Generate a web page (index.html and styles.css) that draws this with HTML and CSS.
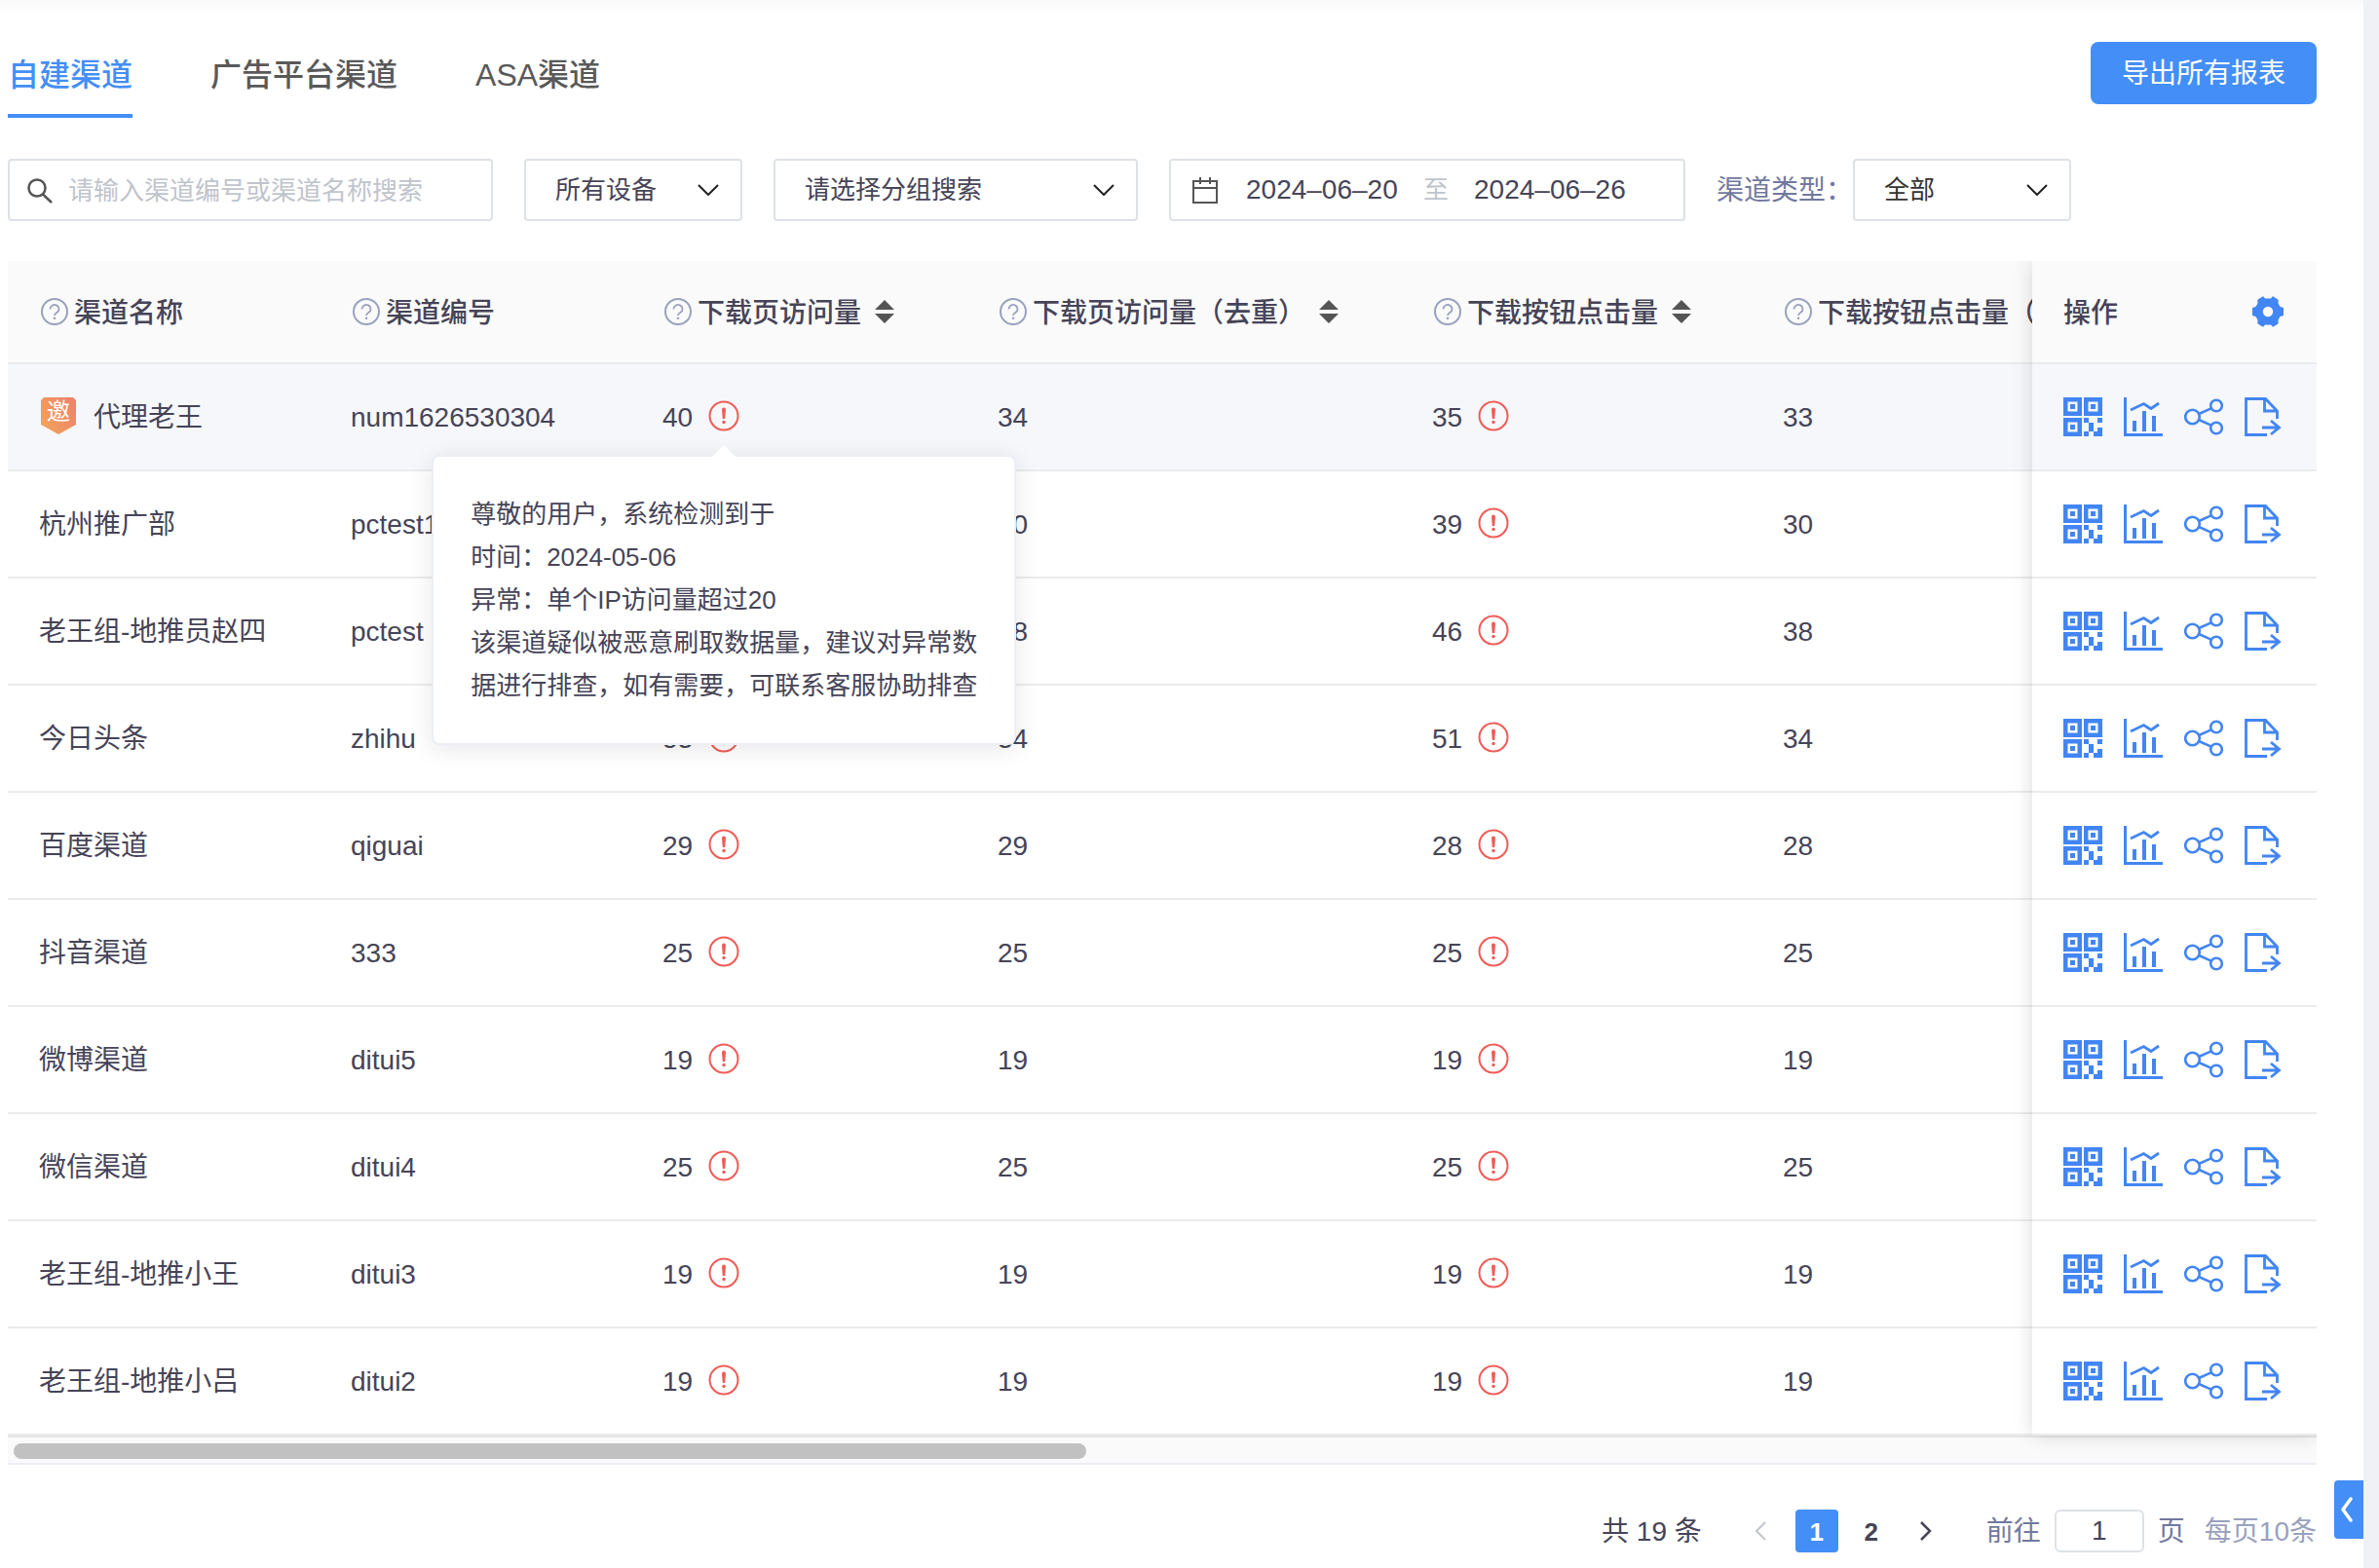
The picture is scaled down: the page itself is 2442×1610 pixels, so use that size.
FILE: index.html
```html
<!DOCTYPE html>
<html lang="zh-CN">
<head>
<meta charset="utf-8">
<title>渠道报表</title>
<link rel="stylesheet" href="styles.css">
</head>
<body>
<svg class="sprite" aria-hidden="true">
  <symbol id="help" viewBox="0 0 28 28"><circle cx="14" cy="14" r="13" fill="none" stroke="currentColor" stroke-width="2"/><path d="M9.500 11.500a4.500 4.300 0 1 1 7 3.300c-1.700 1.100-2.500 1.700-2.500 3.200" fill="none" stroke="currentColor" stroke-width="1.800"/><circle cx="14" cy="20.800" r="1.300" fill="currentColor"/></symbol>
  <symbol id="warn" viewBox="0 0 32 32"><circle cx="16" cy="16" r="14.500" fill="none" stroke="currentColor" stroke-width="2"/><path d="M14 9.500a2 2 0 0 1 4 0l-.8 9.500h-2.400z" fill="currentColor"/><circle cx="16" cy="22.500" r="1.700" fill="currentColor"/></symbol>
  <symbol id="sort" viewBox="0 0 20 24"><path d="M10 0l10 10H0zM10 24L0 14h20z" fill="currentColor"/></symbol>
  <symbol id="down" viewBox="0 0 22 12"><path d="M1 1l10 10L21 1" fill="none" stroke="currentColor" stroke-width="2"/></symbol>
  <symbol id="qr" viewBox="0 0 40 40"><path fill="currentColor" fill-rule="evenodd" d="M0 0h19v19H0zM4.500 4.500v10h10v-10zM21 0h19v19H21zM25.500 4.500v10h10v-10zM0 21h19v19H0zM4.500 25.500v10h10v-10zM7 7h5v5H7zM28 7h5v5h-5zM7 28h5v5H7zM21 21h5v5h5v9h-5v-9h-5zM35 21h5v5h-5zM21 35h5v5h-5zM35 31h5v9h-9v-5h4z"/></symbol>
  <symbol id="chart" viewBox="0 0 40 40"><path fill="currentColor" d="M0 0h3v37h37v3H0zM9 24h4v11H9zM19 14h4v21h-4zM29 19h4v16h-4z"/><path d="M7 13l13.500-6.500L28 11.500 36 6" fill="none" stroke="currentColor" stroke-width="2.800"/></symbol>
  <symbol id="share" viewBox="0 0 40 40"><g fill="none" stroke="currentColor" stroke-width="2.600"><circle cx="8.500" cy="20" r="7.300"/><circle cx="33" cy="8.500" r="5.800"/><circle cx="33" cy="31.500" r="5.800"/><path d="M15 17l12.700-5.600M15 23l12.700 5.600"/></g></symbol>
  <symbol id="export" viewBox="0 0 40 40"><path d="M23 38.500H1.500v-37h20L33.500 14v8M20.500 1.500V14h13M18 31h17M27 24l8.500 7-8.500 7" fill="none" stroke="currentColor" stroke-width="2.800"/></symbol>
</svg>

<div class="layout">
  <main class="content">
    <header class="topbar">
      <nav class="tabs">
        <a class="tab active" href="#self">自建渠道</a>
        <a class="tab" href="#ads">广告平台渠道</a>
        <a class="tab" href="#asa">ASA渠道</a>
      </nav>
      <button class="primary" type="button">导出所有报表</button>
    </header>

    <form class="filters">
      <label class="field search">
        <svg width="26" height="26" viewBox="0 0 26 26"><g fill="none" stroke="#555" stroke-width="2.500"><circle cx="10" cy="10" r="8.500"/><path d="M16 16.500l9 8.500"/></g></svg>
        <input type="text" aria-label="搜索渠道" placeholder="请输入渠道编号或渠道名称搜索">
      </label>
      <div class="field picker">
        <select aria-label="设备"><option>所有设备</option></select>
        <svg class="arrow"><use href="#down"/></svg>
      </div>
      <div class="field picker wide">
        <select aria-label="分组"><option>请选择分组搜索</option></select>
        <svg class="arrow"><use href="#down"/></svg>
      </div>
      <div class="field range">
        <svg width="26" height="28" viewBox="0 0 26 28"><path d="M1 5h24v22H1zM1 12h24M8 1v7M18 1v7" fill="none" stroke="#555" stroke-width="2"/></svg>
        <input type="text" aria-label="开始日期" value="2024–06–20">
        <span>至</span>
        <input type="text" aria-label="结束日期" value="2024–06–26">
      </div>
      <div class="type">
        <label for="type">渠道类型：</label>
        <div class="field picker">
          <select id="type"><option>全部</option></select>
          <svg class="arrow"><use href="#down"/></svg>
        </div>
      </div>
    </form>

    <section class="report">
      <div class="viewport">
        <table>
          <colgroup><col class="c-name"><col class="c-name"><col class="c-visit"><col class="c-unique"><col class="c-click"><col><col class="c-ops"></colgroup>
          <thead>
            <tr>
              <th><div class="head"><svg class="help"><use href="#help"/></svg>渠道名称</div></th>
              <th><div class="head"><svg class="help"><use href="#help"/></svg>渠道编号</div></th>
              <th><div class="head"><svg class="help"><use href="#help"/></svg>下载页访问量<svg class="sort"><use href="#sort"/></svg></div></th>
              <th><div class="head"><svg class="help"><use href="#help"/></svg>下载页访问量（去重）<svg class="sort"><use href="#sort"/></svg></div></th>
              <th><div class="head"><svg class="help"><use href="#help"/></svg>下载按钮点击量<svg class="sort"><use href="#sort"/></svg></div></th>
              <th><div class="head"><svg class="help"><use href="#help"/></svg>下载按钮点击量（</div></th>
              <th><div class="head ops-head">操作<button type="button" aria-label="设置"><svg width="32" height="32" viewBox="0 0 32 32"><path fill="currentColor" fill-rule="evenodd" d="M6 3.200L10.500 .4Q11.500 0 12 1.200 12.500 2.600 14 2.600h4q1.500 0 2-1.400Q20.500 0 21.500 .4L26 3.200q1 .8 .7 2-.6 1.600 .1 2.800l1.400 2.500q.8 1 2.300 1 1.500 0 1.500 1.300v6.400q0 1.300-1.500 1.300-1.500 0-2.300 1L26.800 24q-.7 1.200-.1 2.800 .3 1.200-.7 2l-4.500 2.600q-1 .4-1.500-.8-.5-1.200-2-1.200h-4q-1.500 0-2 1.200-.5 1.200-1.500 .8L6 28.800q-1-.8-.7-2 .6-1.600-.1-2.800l-1.400-2.500q-.8-1-2.300-1Q0 20.500 0 19.200v-6.400q0-1.300 1.500-1.300 1.500 0 2.300-1L5.200 8q.7-1.200 .1-2.800-.3-1.200 .7-2zM16 10.800a5.200 5.200 0 1 0 0 10.400 5.200 5.200 0 0 0 0-10.400z"/></svg></button></div></th>
            </tr>
          </thead>
          <tbody>
            <tr class="hover">
              <td><div class="cell"><span class="badge">邀</span>代理老王</div></td><td>num1626530304</td>
              <td><div class="cell">40<span class="alert"><svg class="warn"><use href="#warn"/></svg>
                <span class="tooltip" role="tooltip">尊敬的用户，系统检测到于<br>时间：2024-05-06<br>异常：单个IP访问量超过20<br>该渠道疑似被恶意刷取数据量，建议对异常数据进行排查，如有需要，可联系客服协助排查</span></span></div></td>
              <td>34</td><td><div class="cell">35<svg class="warn"><use href="#warn"/></svg></div></td><td>33</td>
              <td><div class="ops"><button type="button" aria-label="二维码"><svg><use href="#qr"/></svg></button><button type="button" aria-label="统计"><svg><use href="#chart"/></svg></button><button type="button" aria-label="分享"><svg><use href="#share"/></svg></button><button type="button" aria-label="导出"><svg><use href="#export"/></svg></button></div></td>
            </tr>
            <tr>
              <td>杭州推广部</td><td>pctest1</td>
              <td><div class="cell">41<svg class="warn"><use href="#warn"/></svg></div></td>
              <td>30</td><td><div class="cell">39<svg class="warn"><use href="#warn"/></svg></div></td><td>30</td>
              <td><div class="ops"><button type="button" aria-label="二维码"><svg><use href="#qr"/></svg></button><button type="button" aria-label="统计"><svg><use href="#chart"/></svg></button><button type="button" aria-label="分享"><svg><use href="#share"/></svg></button><button type="button" aria-label="导出"><svg><use href="#export"/></svg></button></div></td>
            </tr>
            <tr>
              <td>老王组-地推员赵四</td><td>pctest</td>
              <td><div class="cell">48<svg class="warn"><use href="#warn"/></svg></div></td>
              <td>38</td><td><div class="cell">46<svg class="warn"><use href="#warn"/></svg></div></td><td>38</td>
              <td><div class="ops"><button type="button" aria-label="二维码"><svg><use href="#qr"/></svg></button><button type="button" aria-label="统计"><svg><use href="#chart"/></svg></button><button type="button" aria-label="分享"><svg><use href="#share"/></svg></button><button type="button" aria-label="导出"><svg><use href="#export"/></svg></button></div></td>
            </tr>
            <tr>
              <td>今日头条</td><td>zhihu</td>
              <td><div class="cell">53<svg class="warn"><use href="#warn"/></svg></div></td>
              <td>34</td><td><div class="cell">51<svg class="warn"><use href="#warn"/></svg></div></td><td>34</td>
              <td><div class="ops"><button type="button" aria-label="二维码"><svg><use href="#qr"/></svg></button><button type="button" aria-label="统计"><svg><use href="#chart"/></svg></button><button type="button" aria-label="分享"><svg><use href="#share"/></svg></button><button type="button" aria-label="导出"><svg><use href="#export"/></svg></button></div></td>
            </tr>
            <tr>
              <td>百度渠道</td><td>qiguai</td>
              <td><div class="cell">29<svg class="warn"><use href="#warn"/></svg></div></td>
              <td>29</td><td><div class="cell">28<svg class="warn"><use href="#warn"/></svg></div></td><td>28</td>
              <td><div class="ops"><button type="button" aria-label="二维码"><svg><use href="#qr"/></svg></button><button type="button" aria-label="统计"><svg><use href="#chart"/></svg></button><button type="button" aria-label="分享"><svg><use href="#share"/></svg></button><button type="button" aria-label="导出"><svg><use href="#export"/></svg></button></div></td>
            </tr>
            <tr>
              <td>抖音渠道</td><td>333</td>
              <td><div class="cell">25<svg class="warn"><use href="#warn"/></svg></div></td>
              <td>25</td><td><div class="cell">25<svg class="warn"><use href="#warn"/></svg></div></td><td>25</td>
              <td><div class="ops"><button type="button" aria-label="二维码"><svg><use href="#qr"/></svg></button><button type="button" aria-label="统计"><svg><use href="#chart"/></svg></button><button type="button" aria-label="分享"><svg><use href="#share"/></svg></button><button type="button" aria-label="导出"><svg><use href="#export"/></svg></button></div></td>
            </tr>
            <tr>
              <td>微博渠道</td><td>ditui5</td>
              <td><div class="cell">19<svg class="warn"><use href="#warn"/></svg></div></td>
              <td>19</td><td><div class="cell">19<svg class="warn"><use href="#warn"/></svg></div></td><td>19</td>
              <td><div class="ops"><button type="button" aria-label="二维码"><svg><use href="#qr"/></svg></button><button type="button" aria-label="统计"><svg><use href="#chart"/></svg></button><button type="button" aria-label="分享"><svg><use href="#share"/></svg></button><button type="button" aria-label="导出"><svg><use href="#export"/></svg></button></div></td>
            </tr>
            <tr>
              <td>微信渠道</td><td>ditui4</td>
              <td><div class="cell">25<svg class="warn"><use href="#warn"/></svg></div></td>
              <td>25</td><td><div class="cell">25<svg class="warn"><use href="#warn"/></svg></div></td><td>25</td>
              <td><div class="ops"><button type="button" aria-label="二维码"><svg><use href="#qr"/></svg></button><button type="button" aria-label="统计"><svg><use href="#chart"/></svg></button><button type="button" aria-label="分享"><svg><use href="#share"/></svg></button><button type="button" aria-label="导出"><svg><use href="#export"/></svg></button></div></td>
            </tr>
            <tr>
              <td>老王组-地推小王</td><td>ditui3</td>
              <td><div class="cell">19<svg class="warn"><use href="#warn"/></svg></div></td>
              <td>19</td><td><div class="cell">19<svg class="warn"><use href="#warn"/></svg></div></td><td>19</td>
              <td><div class="ops"><button type="button" aria-label="二维码"><svg><use href="#qr"/></svg></button><button type="button" aria-label="统计"><svg><use href="#chart"/></svg></button><button type="button" aria-label="分享"><svg><use href="#share"/></svg></button><button type="button" aria-label="导出"><svg><use href="#export"/></svg></button></div></td>
            </tr>
            <tr>
              <td>老王组-地推小吕</td><td>ditui2</td>
              <td><div class="cell">19<svg class="warn"><use href="#warn"/></svg></div></td>
              <td>19</td><td><div class="cell">19<svg class="warn"><use href="#warn"/></svg></div></td><td>19</td>
              <td><div class="ops"><button type="button" aria-label="二维码"><svg><use href="#qr"/></svg></button><button type="button" aria-label="统计"><svg><use href="#chart"/></svg></button><button type="button" aria-label="分享"><svg><use href="#share"/></svg></button><button type="button" aria-label="导出"><svg><use href="#export"/></svg></button></div></td>
            </tr>
          </tbody>
        </table>
        <div class="pinned-shadow"></div>
      </div>
      <div class="scrollbar"><div class="thumb" style="width: 46.7%"></div></div>
    </section>

    <footer class="pager">
      <span class="total">共 19 条</span>
      <button class="step off" type="button" aria-label="上一页" disabled><svg width="12" height="20" viewBox="0 0 12 20"><path d="M11 1L2 10l9 9" fill="none" stroke="currentColor" stroke-width="2"/></svg></button>
      <button class="page current" type="button">1</button>
      <button class="page" type="button">2</button>
      <button class="step" type="button" aria-label="下一页"><svg width="12" height="20" viewBox="0 0 12 20"><path d="M1 1l9 9-9 9" fill="none" stroke="currentColor" stroke-width="2.500"/></svg></button>
      <label class="jump"><span>前往</span><input type="text" value="1"><span>页</span></label>
      <span class="size">每页10条</span>
    </footer>
  </main>
  <button class="drawer" type="button" aria-label="展开"><svg width="14" height="26" viewBox="0 0 14 26"><path d="M11 2L3 13l8 11" fill="none" stroke="#fff" stroke-width="3.500" stroke-linecap="round" stroke-linejoin="round"/></svg></button>
</div>
</body>
</html>
```

FILE: styles.css
```css
* { box-sizing: border-box; }
body {
  margin: 0;
  background: #fff;
  color: #464457;
  font: 28px/40px "Liberation Sans", "Noto Sans CJK SC", sans-serif;
}
button, input, select { font: inherit; color: inherit; border: 0; padding: 0; margin: 0; background: none; outline: 0; }
button { display: flex; align-items: center; justify-content: center; cursor: pointer; }
a { color: inherit; text-decoration: none; }
svg { display: block; flex: none; }
.sprite { position: absolute; width: 0; height: 0; }

.layout {
  position: relative;
  min-height: 100vh;
  border-right: 16px solid #eff1f6;
  background: linear-gradient(#fafafa, #fff 14px);
}
.content { padding: 43px 48px 16px 8px; }

.topbar { display: flex; justify-content: space-between; align-items: flex-start; }
.tabs { display: flex; gap: 80px; }
.tab { font-size: 32px; line-height: 64px; padding: 2px 0 8px; border-bottom: 4px solid transparent; color: #595959; font-weight: 500; }
.tab.active { color: #448ef7; border-color: #448ef7; }
.primary { height: 64px; padding: 2px 32px 0; border-radius: 8px; background: #448ef7; color: #fff; }

.filters { display: flex; gap: 32px; margin: 42px 0 41px; font-size: 26px; }
.field { display: flex; align-items: center; height: 64px; border: 2px solid #dee2e6; border-radius: 4px; }
.search { width: 498px; padding: 2px 20px 0 18px; gap: 16px; }
.search input { flex: 1; min-width: 0; }
.search input::placeholder { color: #c0c4cc; opacity: 1; }
.picker { position: relative; width: 224px; }
.picker.wide { width: 374px; }
.picker select { width: 100%; height: 60px; padding: 0 30px; appearance: none; }
.picker .arrow { position: absolute; right: 22px; top: 24px; width: 22px; height: 12px; color: #222; pointer-events: none; }
.range { width: 530px; padding: 0 22px; }
.range input { width: 160px; margin-left: 29px; font-size: 28px; }
.range span { margin-left: 22px; color: #c0c4cc; }
.range span + input { margin-left: 26px; }
.type { display: flex; align-items: center; color: #7278a0; font-size: 28px; }
.type label { padding-top: 2px; }
.type .picker { font-size: 26px; color: #333; }

.report { position: relative; overflow: clip; }
.viewport { position: relative; }
table { width: 100%; table-layout: fixed; border-collapse: separate; border-spacing: 0; }
.c-name { width: 320px; }
.c-visit { width: 344px; }
.c-unique { width: 446px; }
.c-click { width: 360px; }
.c-ops { width: 292px; }
th, td { text-align: left; padding: 0 0 0 32px; white-space: nowrap; border-bottom: 2px solid #ebebed; }
th { height: 106px; padding-top: 4px; background: #fafafa; font-weight: 500; overflow: hidden; }
td { height: 110px; padding-top: 2px; }
td:last-child { padding-top: 0; }
.hover td { background: #f5f7fb; }
.head { display: flex; align-items: center; }
.help { width: 28px; height: 28px; margin: 0 6px 4px 2px; color: #9aa1bf; }
.sort { width: 20px; height: 24px; margin: 0 0 4px 14px; color: #555; }
.ops-head { justify-content: space-between; padding-right: 34px; }
.ops-head button { margin-bottom: 4px; color: #4285f4; }
.cell { display: flex; align-items: center; }
.warn { width: 32px; height: 32px; margin: 0 0 4px 16px; color: #f05b56; }
.ops { display: flex; gap: 22px; color: #4285f4; }
.ops svg { width: 40px; height: 40px; }
.badge {
  width: 36px; height: 38px; margin: 0 18px 4px 2px;
  color: #fff; font-size: 24px; line-height: 30px; text-align: center;
  background: linear-gradient(60deg, #f3a65a, #ee7f6c);
  clip-path: polygon(3px 0, 33px 0, 36px 3px, 36px 28px, 18px 38px, 0 28px, 0 3px);
}
.alert { position: relative; }
.tooltip {
  position: absolute; z-index: 3; top: 56px; left: -268px;
  width: 600px; padding: 37px 38px;
  border: 2px solid #ebeef5; border-radius: 8px; background: #fff;
  box-shadow: 0 4px 24px rgba(0, 0, 0, .1);
  font-size: 26px; line-height: 44px; white-space: normal;
}
.tooltip::before {
  content: ""; position: absolute; top: -12px; left: 286px;
  border: 12px solid transparent; border-top: 0; border-bottom-color: #fff;
}
.pinned-shadow { position: absolute; top: 0; right: 0; bottom: 0; width: 292px; box-shadow: 0 0 20px rgba(0, 0, 0, .14); pointer-events: none; z-index: 1; }
.scrollbar { height: 30px; padding: 6px; border-top: 2px solid #e6e6e6; border-bottom: 2px solid #ebeef5; background: #fafafa; }
.thumb { height: 16px; border-radius: 8px; background: #c1c1c1; }

.pager { display: flex; align-items: center; justify-content: flex-end; margin-top: 46px; line-height: 44px; }
.pager span { height: 44px; padding-top: 1px; }
.step { width: 44px; height: 44px; }
.off { color: #c0c4cc; margin-left: 38px; }
.page { width: 44px; height: 44px; margin-left: 14px; padding-top: 2px; border-radius: 4px; font-size: 26px; font-weight: 700; }
.page + .page { margin-left: 12px; }
.page + .step { margin-left: 12px; }
.current { background: #448ef7; color: #fff; }
.jump { display: flex; margin-left: 40px; color: #7278a0; }
.jump input { width: 92px; height: 44px; margin: 0 14px; border: 2px solid #dee2e6; border-radius: 6px; text-align: center; color: #464457; }
.size { margin-left: 20px; color: #9aa1bf; }
.drawer { position: absolute; right: 0; bottom: 30px; width: 30px; height: 60px; padding-right: 4px; border-radius: 4px 0 0 4px; background: #448ef7; }
```
